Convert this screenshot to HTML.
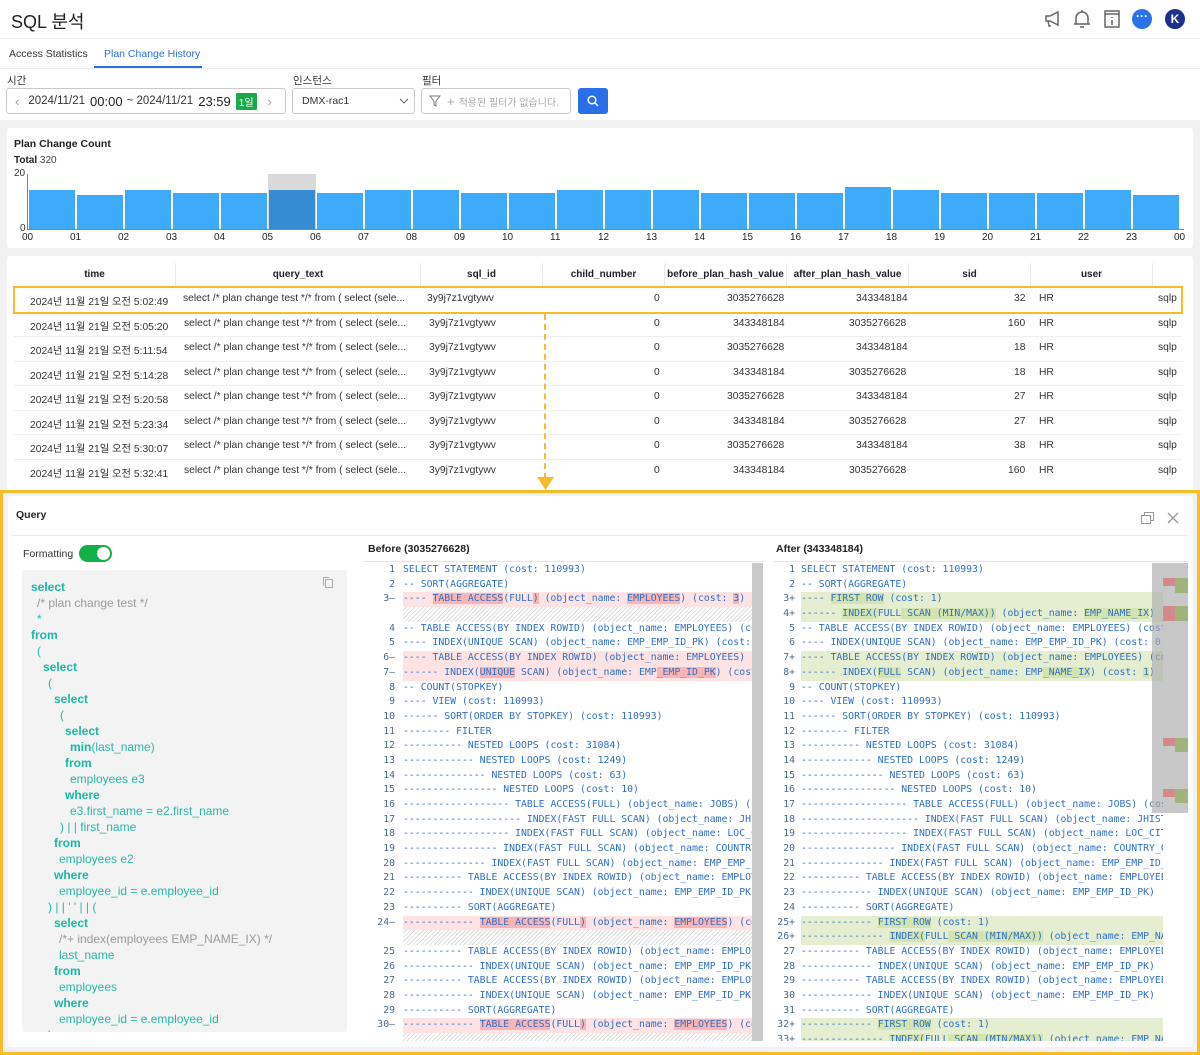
<!DOCTYPE html>
<html><head><meta charset="utf-8">
<style>
*{box-sizing:border-box;margin:0;padding:0}
body{width:1200px;height:1055px;overflow:hidden;background:#f2f2f2;font-family:"Liberation Sans","Noto Sans CJK KR",sans-serif;color:#333;position:relative}
.abs{position:absolute}
.top{left:0;top:0;width:1200px;height:120px;background:#fff}
.input{position:absolute;top:88px;height:26px;border:1px solid #c9c9c9;border-radius:3px;background:#fff;font-size:11.5px;display:flex;align-items:center}
.card{position:absolute;background:#fff;border-radius:3px}
.th{position:absolute;top:263px;height:24px;line-height:24px;font-size:10px;font-weight:bold;text-align:center;border-right:1px solid #eaeaea;color:#222;white-space:nowrap;overflow:hidden}
.row{position:absolute;left:14px;width:1168px;height:24.5px;border-bottom:1px solid #efefef;font-size:10.3px;color:#333;overflow:hidden}
.row span{position:absolute;top:5px;white-space:nowrap}
.mono{font-family:"DejaVu Sans Mono","Liberation Mono",monospace;font-size:9.8px;color:#2f6fc4}
.dl{height:14.7px;line-height:14.7px;white-space:pre;position:relative}
.n{position:absolute;text-align:right;color:#4d6b8a;width:30px}
.red{background:#fde3e3;display:inline-block;width:360px}
.grn{background:#e5eed0}
.hr{background:#f9b5b5}
.hg{background:#d3e4ae}
.hatch{background:repeating-linear-gradient(135deg,#fff 0 2px,#dcdcdc 2px 3px)}
.kw{font-weight:bold;color:#18b8a6}
.tx{color:#2ab7aa}
.cm{color:#9a9a9a}
.ql{position:absolute;font-size:12px;white-space:nowrap}
</style></head><body>
<div class="abs top"></div>
<div class="abs" style="left:11px;top:8px;font-size:18px;color:#222">SQL 분석</div>
<div class="abs" style="left:0;top:38px;width:1200px;height:1px;background:#ececec"></div>
<svg class="abs" style="left:1043px;top:9px" width="20" height="20" viewBox="0 0 20 20" fill="none" stroke="#666" stroke-width="1.5"><path d="M3 7h4l8-4v13l-8-4H3z M5 12l1 5h2"/></svg>
<svg class="abs" style="left:1072px;top:8px" width="20" height="22" viewBox="0 0 20 22" fill="none" stroke="#666" stroke-width="1.5"><path d="M10 2v2 M4 16V10a6 6 0 0 1 12 0v6 M2 16h16 M8 19h4"/></svg>
<svg class="abs" style="left:1102px;top:9px" width="20" height="20" viewBox="0 0 20 20" fill="none" stroke="#666" stroke-width="1.5"><rect x="3" y="2" width="14" height="16"/><path d="M3 5h14 M10 8v1 M10 11v5"/></svg>
<div class="abs" style="left:1132px;top:9px;width:20px;height:20px;border-radius:50%;background:#2a72e8;color:#fff;font-size:12px;text-align:center;line-height:15px;font-weight:bold">···</div>
<div class="abs" style="left:1165px;top:9px;width:20px;height:20px;border-radius:50%;background:#1e2f8c;color:#fff;font-size:12px;text-align:center;line-height:20px;font-weight:bold">K</div>
<div class="abs" style="left:9px;top:48px;font-size:10.5px;color:#333">Access Statistics</div>
<div class="abs" style="left:104px;top:48px;font-size:10.5px;color:#2a6fe0">Plan Change History</div>
<div class="abs" style="left:94px;top:66px;width:108px;height:2px;background:#2a6fe0"></div>
<div class="abs" style="left:0;top:68px;width:1200px;height:1px;background:#ececec"></div>
<div class="abs" style="left:7px;top:73px;font-size:10.5px">시간</div>
<div class="abs" style="left:293px;top:73px;font-size:10.5px">인스턴스</div>
<div class="abs" style="left:422px;top:73px;font-size:10.5px">필터</div>
<div class="input" style="left:6px;width:280px">
 <span style="color:#999;margin-left:8px;font-size:13px">&#8249;</span>
 <span style="margin-left:9px;color:#333">2024/11/21</span>
 <span style="margin-left:5px;font-size:13px;color:#222">00:00</span>
 <span style="margin-left:4px">~ 2024/11/21</span>
 <span style="margin-left:5px;font-size:13px;color:#222">23:59</span>
 <span style="margin-left:5px;background:#1ba94c;color:#fff;font-size:10px;padding:1px 3px;border-radius:1px">1일</span>
 <span style="color:#999;margin-left:11px;font-size:13px">&#8250;</span>
</div>
<div class="input" style="left:292px;width:123px"><span style="margin-left:9px;font-size:10.5px">DMX-rac1</span>
<svg class="abs" style="left:106px;top:9px" width="10" height="7" viewBox="0 0 10 7" fill="none" stroke="#666"><path d="M1 1l4 4 4-4"/></svg></div>
<div class="input" style="left:421px;width:150px"><svg style="margin-left:7px" width="12" height="12" viewBox="0 0 12 12" fill="none" stroke="#777"><path d="M1 1h10L7 6v5L5 10V6z"/></svg><span style="margin-left:6px;color:#aaa;font-size:13px">+</span><span style="margin-left:4px;color:#aaa;font-size:10px">적용된 필터가 없습니다.</span></div>
<div class="abs" style="left:578px;top:88px;width:30px;height:26px;background:#2a6fe8;border-radius:3px"><svg style="position:absolute;left:9px;top:7px" width="12" height="12" viewBox="0 0 12 12" fill="none" stroke="#fff" stroke-width="1.5"><circle cx="5" cy="5" r="3.8"/><path d="M8 8l3 3"/></svg></div>

<div class="card" style="left:7px;top:128px;width:1186px;height:120px"></div>
<div class="abs" style="left:14px;top:138px;font-size:10.5px;font-weight:bold;color:#222">Plan Change Count</div>
<div class="abs" style="left:14px;top:155px;font-size:10px;color:#444"><b style="color:#222">Total</b> 320</div>
<div class="abs" style="left:14px;top:168px;font-size:10px">20</div>
<div class="abs" style="left:20px;top:223px;font-size:10px">0</div>
<div class="abs" style="left:27px;top:174px;width:1px;height:56px;background:#888"></div>
<div class="abs" style="left:27px;top:229px;width:1157px;height:1px;background:#888"></div>
<div class="abs" style="left:268px;top:174px;width:48px;height:55px;background:#d9d9d9"></div>
<svg class="abs" style="left:28px;top:174px" width="1156" height="55">
<g fill="#3fa9fa">
<rect x="1" y="16" width="46" height="39"/><rect x="49" y="21" width="46" height="34"/><rect x="97" y="16" width="46" height="39"/><rect x="145" y="19" width="46" height="36"/><rect x="193" y="19" width="46" height="36"/><rect x="241" y="16" width="46" height="39" fill="#378bd2"/><rect x="289" y="19" width="46" height="36"/><rect x="337" y="16" width="46" height="39"/><rect x="385" y="16" width="46" height="39"/><rect x="433" y="19" width="46" height="36"/><rect x="481" y="19" width="46" height="36"/><rect x="529" y="16" width="46" height="39"/><rect x="577" y="16" width="46" height="39"/><rect x="625" y="16" width="46" height="39"/><rect x="673" y="19" width="46" height="36"/><rect x="721" y="19" width="46" height="36"/><rect x="769" y="19" width="46" height="36"/><rect x="817" y="13" width="46" height="42"/><rect x="865" y="16" width="46" height="39"/><rect x="913" y="19" width="46" height="36"/><rect x="961" y="19" width="46" height="36"/><rect x="1009" y="19" width="46" height="36"/><rect x="1057" y="16" width="46" height="39"/><rect x="1105" y="21" width="46" height="34"/>
</g></svg>
<div class="abs" style="left:0;top:232px;width:1200px;font-size:10px;color:#222;height:12px">
<span class="abs" style="left:22px">00</span><span class="abs" style="left:70px">01</span><span class="abs" style="left:118px">02</span><span class="abs" style="left:166px">03</span><span class="abs" style="left:214px">04</span><span class="abs" style="left:262px">05</span><span class="abs" style="left:310px">06</span><span class="abs" style="left:358px">07</span><span class="abs" style="left:406px">08</span><span class="abs" style="left:454px">09</span><span class="abs" style="left:502px">10</span><span class="abs" style="left:550px">11</span><span class="abs" style="left:598px">12</span><span class="abs" style="left:646px">13</span><span class="abs" style="left:694px">14</span><span class="abs" style="left:742px">15</span><span class="abs" style="left:790px">16</span><span class="abs" style="left:838px">17</span><span class="abs" style="left:886px">18</span><span class="abs" style="left:934px">19</span><span class="abs" style="left:982px">20</span><span class="abs" style="left:1030px">21</span><span class="abs" style="left:1078px">22</span><span class="abs" style="left:1126px">23</span><span class="abs" style="left:1174px">00</span>
</div>

<div class="card" style="left:7px;top:256px;width:1186px;height:236px"></div>
<div class="abs" style="left:14px;top:287px;width:1168px;height:1px;background:#e5e5e5"></div>
<div class="th" style="left:14px;width:162px">time</div>
<div class="th" style="left:176px;width:245px">query_text</div>
<div class="th" style="left:421px;width:122px">sql_id</div>
<div class="th" style="left:543px;width:122px">child_number</div>
<div class="th" style="left:665px;width:122px">before_plan_hash_value</div>
<div class="th" style="left:787px;width:122px">after_plan_hash_value</div>
<div class="th" style="left:909px;width:122px">sid</div>
<div class="th" style="left:1031px;width:122px">user</div>

<div class="row" style="top:288px"><span style="left:16px">2024년 11월 21일 오전 5:02:49</span><span style="left:169px">select /* plan change test */* from ( select (sele...</span><span style="left:413px">3y9j7z1vgtywv</span><span style="left:640px">0</span><span style="left:713px">3035276628</span><span style="left:842px">343348184</span><span style="left:1000px">32</span><span style="left:1025px">HR</span><span style="left:1144px">sqlp</span></div>
<div class="row" style="top:312.5px"><span style="left:16px">2024년 11월 21일 오전 5:05:20</span><span style="left:170px">select /* plan change test */* from ( select (sele...</span><span style="left:415px">3y9j7z1vgtywv</span><span style="left:640px">0</span><span style="left:719px">343348184</span><span style="left:835px">3035276628</span><span style="left:994px">160</span><span style="left:1025px">HR</span><span style="left:1144px">sqlp</span></div>
<div class="row" style="top:337px"><span style="left:16px">2024년 11월 21일 오전 5:11:54</span><span style="left:170px">select /* plan change test */* from ( select (sele...</span><span style="left:415px">3y9j7z1vgtywv</span><span style="left:640px">0</span><span style="left:713px">3035276628</span><span style="left:842px">343348184</span><span style="left:1000px">18</span><span style="left:1025px">HR</span><span style="left:1144px">sqlp</span></div>
<div class="row" style="top:361.5px"><span style="left:16px">2024년 11월 21일 오전 5:14:28</span><span style="left:170px">select /* plan change test */* from ( select (sele...</span><span style="left:415px">3y9j7z1vgtywv</span><span style="left:640px">0</span><span style="left:719px">343348184</span><span style="left:835px">3035276628</span><span style="left:1000px">18</span><span style="left:1025px">HR</span><span style="left:1144px">sqlp</span></div>
<div class="row" style="top:386px"><span style="left:16px">2024년 11월 21일 오전 5:20:58</span><span style="left:170px">select /* plan change test */* from ( select (sele...</span><span style="left:415px">3y9j7z1vgtywv</span><span style="left:640px">0</span><span style="left:713px">3035276628</span><span style="left:842px">343348184</span><span style="left:1000px">27</span><span style="left:1025px">HR</span><span style="left:1144px">sqlp</span></div>
<div class="row" style="top:410.5px"><span style="left:16px">2024년 11월 21일 오전 5:23:34</span><span style="left:170px">select /* plan change test */* from ( select (sele...</span><span style="left:415px">3y9j7z1vgtywv</span><span style="left:640px">0</span><span style="left:719px">343348184</span><span style="left:835px">3035276628</span><span style="left:1000px">27</span><span style="left:1025px">HR</span><span style="left:1144px">sqlp</span></div>
<div class="row" style="top:435px"><span style="left:16px">2024년 11월 21일 오전 5:30:07</span><span style="left:170px">select /* plan change test */* from ( select (sele...</span><span style="left:415px">3y9j7z1vgtywv</span><span style="left:640px">0</span><span style="left:713px">3035276628</span><span style="left:842px">343348184</span><span style="left:1000px">38</span><span style="left:1025px">HR</span><span style="left:1144px">sqlp</span></div>
<div class="row" style="top:459.5px;border-bottom:none"><span style="left:16px">2024년 11월 21일 오전 5:32:41</span><span style="left:170px">select /* plan change test */* from ( select (sele...</span><span style="left:415px">3y9j7z1vgtywv</span><span style="left:640px">0</span><span style="left:719px">343348184</span><span style="left:835px">3035276628</span><span style="left:994px">160</span><span style="left:1025px">HR</span><span style="left:1144px">sqlp</span></div>
<div class="abs" style="left:13px;top:286px;width:1170px;height:28px;border:2px solid #f7bc2a"></div>
<div class="abs" style="left:544px;top:314px;width:0;height:165px;border-left:2px dashed #f7bc2a"></div>
<svg class="abs" style="left:537px;top:477px" width="17" height="13"><path d="M0 0h17L8.5 13z" fill="#f7bc2a"/></svg>

<div class="abs" style="left:0;top:490px;width:1200px;height:565px;border:3px solid #f7bc2a;background:#f2f2f2"></div>
<div class="card" style="left:8px;top:496px;width:1185px;height:551px"></div>
<div class="abs" style="left:16px;top:509px;font-size:10.5px;font-weight:bold;color:#222">Query</div>
<svg class="abs" style="left:1140px;top:511px" width="15" height="14" fill="none" stroke="#999"><rect x="1.5" y="4.5" width="9" height="8"/><path d="M4.5 4.5V1.5h9v8h-3"/></svg>
<svg class="abs" style="left:1167px;top:512px" width="12" height="12" stroke="#999" stroke-width="1.3"><path d="M1 1l10 10M11 1L1 11"/></svg>
<div class="abs" style="left:12px;top:535px;width:1176px;height:1px;background:#e8e8e8"></div>
<div class="abs" style="left:23px;top:548px;font-size:10.5px;color:#333">Formatting</div>
<div class="abs" style="left:79px;top:545px;width:33px;height:17px;border-radius:9px;background:#12b047"><div style="position:absolute;right:2px;top:2px;width:13px;height:13px;border-radius:50%;background:#fff"></div></div>
<div class="abs" style="left:22px;top:570px;width:325px;height:462px;background:#f3f3f3;border-radius:3px;overflow:hidden">
<svg style="position:absolute;left:300px;top:6px" width="12" height="12" fill="none" stroke="#aaa"><rect x="3.5" y="3.5" width="7" height="8"/><path d="M1.5 9.5v-8h6"/></svg>
<div class="ql kw" style="left:9px;top:10px">select</div>
<div class="ql cm" style="left:15px;top:26px">/* plan change test */</div>
<div class="ql tx" style="left:15px;top:42px">*</div>
<div class="ql kw" style="left:9px;top:58px">from</div>
<div class="ql tx" style="left:15px;top:74px">(</div>
<div class="ql kw" style="left:21px;top:90px">select</div>
<div class="ql tx" style="left:26px;top:106px">(</div>
<div class="ql kw" style="left:32px;top:122px">select</div>
<div class="ql tx" style="left:38px;top:138px">(</div>
<div class="ql kw" style="left:43px;top:154px">select</div>
<div class="ql tx" style="left:48px;top:170px"><b class="kw">min</b>(last_name)</div>
<div class="ql kw" style="left:43px;top:186px">from</div>
<div class="ql tx" style="left:48px;top:202px">employees e3</div>
<div class="ql kw" style="left:43px;top:218px">where</div>
<div class="ql tx" style="left:48px;top:234px">e3.first_name = e2.first_name</div>
<div class="ql tx" style="left:38px;top:250px">) | | first_name</div>
<div class="ql kw" style="left:32px;top:266px">from</div>
<div class="ql tx" style="left:37px;top:282px">employees e2</div>
<div class="ql kw" style="left:32px;top:298px">where</div>
<div class="ql tx" style="left:37px;top:314px">employee_id = e.employee_id</div>
<div class="ql tx" style="left:26px;top:330px">) | | ' ' | | (</div>
<div class="ql kw" style="left:32px;top:346px">select</div>
<div class="ql cm" style="left:37px;top:362px">/*+ index(employees EMP_NAME_IX) */</div>
<div class="ql tx" style="left:37px;top:378px">last_name</div>
<div class="ql kw" style="left:32px;top:394px">from</div>
<div class="ql tx" style="left:37px;top:410px">employees</div>
<div class="ql kw" style="left:32px;top:426px">where</div>
<div class="ql tx" style="left:37px;top:442px">employee_id = e.employee_id</div>
<div class="ql tx" style="left:26px;top:458px">)</div>
</div>

<div class="abs" style="left:368px;top:543px;font-size:10.5px;font-weight:bold;color:#222">Before (3035276628)</div>
<div class="abs" style="left:776px;top:543px;font-size:10.5px;font-weight:bold;color:#222">After (343348184)</div>
<div class="abs" style="left:364px;top:561px;width:400px;height:1px;background:#e5e5e5"></div>
<div class="abs" style="left:773px;top:561px;width:416px;height:1px;background:#e5e5e5"></div>

<div class="abs mono" style="left:365px;top:563px;width:387px;height:478px;overflow:hidden">
<div class="dl"><span class="n">1</span><span style="margin-left:38px">SELECT STATEMENT (cost: 110993)</span></div>
<div class="dl"><span class="n">2</span><span style="margin-left:38px">-- SORT(AGGREGATE)</span></div>
<div class="dl"><span class="n">3—</span><span style="margin-left:38px" class="red">---- <span class="hr">TABLE ACCESS</span>(FULL<span class="hr">)</span> (object_name: <span class="hr">EMPLOYEES</span>) (cost: <span class="hr">3</span>)</span></div>
<div class="dl"><span style="margin-left:38px;display:inline-block;width:360px;height:14.7px" class="hatch"></span></div>
<div class="dl"><span class="n">4</span><span style="margin-left:38px">-- TABLE ACCESS(BY INDEX ROWID) (object_name: EMPLOYEES) (cost</span></div>
<div class="dl"><span class="n">5</span><span style="margin-left:38px">---- INDEX(UNIQUE SCAN) (object_name: EMP_EMP_ID_PK) (cost: 0</span></div>
<div class="dl"><span class="n">6—</span><span style="margin-left:38px" class="red">---- TABLE ACCESS(BY INDEX ROWID) (object_name: EMPLOYEES) (co</span></div>
<div class="dl"><span class="n">7—</span><span style="margin-left:38px" class="red">------ INDEX(<span class="hr">UNIQUE</span> SCAN) (object_name: EMP<span class="hr">_EMP_ID_PK</span>) (cost: </span></div>
<div class="dl"><span class="n">8</span><span style="margin-left:38px">-- COUNT(STOPKEY)</span></div>
<div class="dl"><span class="n">9</span><span style="margin-left:38px">---- VIEW (cost: 110993)</span></div>
<div class="dl"><span class="n">10</span><span style="margin-left:38px">------ SORT(ORDER BY STOPKEY) (cost: 110993)</span></div>
<div class="dl"><span class="n">11</span><span style="margin-left:38px">-------- FILTER</span></div>
<div class="dl"><span class="n">12</span><span style="margin-left:38px">---------- NESTED LOOPS (cost: 31084)</span></div>
<div class="dl"><span class="n">13</span><span style="margin-left:38px">------------ NESTED LOOPS (cost: 1249)</span></div>
<div class="dl"><span class="n">14</span><span style="margin-left:38px">-------------- NESTED LOOPS (cost: 63)</span></div>
<div class="dl"><span class="n">15</span><span style="margin-left:38px">---------------- NESTED LOOPS (cost: 10)</span></div>
<div class="dl"><span class="n">16</span><span style="margin-left:38px">------------------ TABLE ACCESS(FULL) (object_name: JOBS) (cost</span></div>
<div class="dl"><span class="n">17</span><span style="margin-left:38px">-------------------- INDEX(FAST FULL SCAN) (object_name: JHIST_E</span></div>
<div class="dl"><span class="n">18</span><span style="margin-left:38px">------------------ INDEX(FAST FULL SCAN) (object_name: LOC_CITY_</span></div>
<div class="dl"><span class="n">19</span><span style="margin-left:38px">---------------- INDEX(FAST FULL SCAN) (object_name: COUNTRY_C_</span></div>
<div class="dl"><span class="n">20</span><span style="margin-left:38px">-------------- INDEX(FAST FULL SCAN) (object_name: EMP_EMP_ID_PK</span></div>
<div class="dl"><span class="n">21</span><span style="margin-left:38px">---------- TABLE ACCESS(BY INDEX ROWID) (object_name: EMPLOYEE</span></div>
<div class="dl"><span class="n">22</span><span style="margin-left:38px">------------ INDEX(UNIQUE SCAN) (object_name: EMP_EMP_ID_PK)</span></div>
<div class="dl"><span class="n">23</span><span style="margin-left:38px">---------- SORT(AGGREGATE)</span></div>
<div class="dl"><span class="n">24—</span><span style="margin-left:38px" class="red">------------ <span class="hr">TABLE ACCESS</span>(FULL<span class="hr">)</span> (object_name: <span class="hr">EMPLOYEES</span>) (cos</span></div>
<div class="dl"><span style="margin-left:38px;display:inline-block;width:360px;height:14.7px" class="hatch"></span></div>
<div class="dl"><span class="n">25</span><span style="margin-left:38px">---------- TABLE ACCESS(BY INDEX ROWID) (object_name: EMPLOYEE</span></div>
<div class="dl"><span class="n">26</span><span style="margin-left:38px">------------ INDEX(UNIQUE SCAN) (object_name: EMP_EMP_ID_PK)</span></div>
<div class="dl"><span class="n">27</span><span style="margin-left:38px">---------- TABLE ACCESS(BY INDEX ROWID) (object_name: EMPLOYEE</span></div>
<div class="dl"><span class="n">28</span><span style="margin-left:38px">------------ INDEX(UNIQUE SCAN) (object_name: EMP_EMP_ID_PK)</span></div>
<div class="dl"><span class="n">29</span><span style="margin-left:38px">---------- SORT(AGGREGATE)</span></div>
<div class="dl"><span class="n">30—</span><span style="margin-left:38px" class="red">------------ <span class="hr">TABLE ACCESS</span>(FULL<span class="hr">)</span> (object_name: <span class="hr">EMPLOYEES</span>) (cos</span></div>
<div class="dl"><span style="margin-left:38px;display:inline-block;width:360px;height:14.7px" class="hatch"></span></div>
</div>
<div class="abs" style="left:752px;top:563px;width:11px;height:478px;background:#c9c9c9"></div>

<div class="abs mono" style="left:765px;top:563px;width:398px;height:478px;overflow:hidden">
<div class="dl"><span class="n">1</span><span style="margin-left:36px">SELECT STATEMENT (cost: 110993)</span></div>
<div class="dl"><span class="n">2</span><span style="margin-left:36px">-- SORT(AGGREGATE)</span></div>
<div class="dl grn" style="margin-left:36px"><span class="n" style="margin-left:-36px">3+</span><span>---- <span class="hg">FIRST ROW</span> (cost: 1)</span></div>
<div class="dl grn" style="margin-left:36px"><span class="n" style="margin-left:-36px">4+</span><span>------ <span class="hg">INDEX(</span>FULL<span class="hg"> SCAN (MIN/MAX))</span> (object_name: <span class="hg">EMP_NAME_IX</span>) (</span></div>
<div class="dl"><span class="n">5</span><span style="margin-left:36px">-- TABLE ACCESS(BY INDEX ROWID) (object_name: EMPLOYEES) (cost</span></div>
<div class="dl"><span class="n">6</span><span style="margin-left:36px">---- INDEX(UNIQUE SCAN) (object_name: EMP_EMP_ID_PK) (cost: 0)</span></div>
<div class="dl grn" style="margin-left:36px"><span class="n" style="margin-left:-36px">7+</span><span>---- TABLE ACCESS(BY INDEX ROWID) (object_name: EMPLOYEES) (co</span></div>
<div class="dl grn" style="margin-left:36px"><span class="n" style="margin-left:-36px">8+</span><span>------ INDEX(<span class="hg">FULL</span> SCAN) (object_name: EMP<span class="hg">_NAME_IX</span>) (cost: <span class="hg">1</span>)</span></div>
<div class="dl"><span class="n">9</span><span style="margin-left:36px">-- COUNT(STOPKEY)</span></div>
<div class="dl"><span class="n">10</span><span style="margin-left:36px">---- VIEW (cost: 110993)</span></div>
<div class="dl"><span class="n">11</span><span style="margin-left:36px">------ SORT(ORDER BY STOPKEY) (cost: 110993)</span></div>
<div class="dl"><span class="n">12</span><span style="margin-left:36px">-------- FILTER</span></div>
<div class="dl"><span class="n">13</span><span style="margin-left:36px">---------- NESTED LOOPS (cost: 31084)</span></div>
<div class="dl"><span class="n">14</span><span style="margin-left:36px">------------ NESTED LOOPS (cost: 1249)</span></div>
<div class="dl"><span class="n">15</span><span style="margin-left:36px">-------------- NESTED LOOPS (cost: 63)</span></div>
<div class="dl"><span class="n">16</span><span style="margin-left:36px">---------------- NESTED LOOPS (cost: 10)</span></div>
<div class="dl"><span class="n">17</span><span style="margin-left:36px">------------------ TABLE ACCESS(FULL) (object_name: JOBS) (cost</span></div>
<div class="dl"><span class="n">18</span><span style="margin-left:36px">-------------------- INDEX(FAST FULL SCAN) (object_name: JHIST_E</span></div>
<div class="dl"><span class="n">19</span><span style="margin-left:36px">------------------ INDEX(FAST FULL SCAN) (object_name: LOC_CITY_</span></div>
<div class="dl"><span class="n">20</span><span style="margin-left:36px">---------------- INDEX(FAST FULL SCAN) (object_name: COUNTRY_C_</span></div>
<div class="dl"><span class="n">21</span><span style="margin-left:36px">-------------- INDEX(FAST FULL SCAN) (object_name: EMP_EMP_ID_PK</span></div>
<div class="dl"><span class="n">22</span><span style="margin-left:36px">---------- TABLE ACCESS(BY INDEX ROWID) (object_name: EMPLOYEE</span></div>
<div class="dl"><span class="n">23</span><span style="margin-left:36px">------------ INDEX(UNIQUE SCAN) (object_name: EMP_EMP_ID_PK)</span></div>
<div class="dl"><span class="n">24</span><span style="margin-left:36px">---------- SORT(AGGREGATE)</span></div>
<div class="dl grn" style="margin-left:36px"><span class="n" style="margin-left:-36px">25+</span><span>------------ <span class="hg">FIRST ROW</span> (cost: 1)</span></div>
<div class="dl grn" style="margin-left:36px"><span class="n" style="margin-left:-36px">26+</span><span>-------------- <span class="hg">INDEX(</span>FULL<span class="hg"> SCAN (MIN/MAX))</span> (object_name: EMP_NA</span></div>
<div class="dl"><span class="n">27</span><span style="margin-left:36px">---------- TABLE ACCESS(BY INDEX ROWID) (object_name: EMPLOYEE</span></div>
<div class="dl"><span class="n">28</span><span style="margin-left:36px">------------ INDEX(UNIQUE SCAN) (object_name: EMP_EMP_ID_PK)</span></div>
<div class="dl"><span class="n">29</span><span style="margin-left:36px">---------- TABLE ACCESS(BY INDEX ROWID) (object_name: EMPLOYEE</span></div>
<div class="dl"><span class="n">30</span><span style="margin-left:36px">------------ INDEX(UNIQUE SCAN) (object_name: EMP_EMP_ID_PK)</span></div>
<div class="dl"><span class="n">31</span><span style="margin-left:36px">---------- SORT(AGGREGATE)</span></div>
<div class="dl grn" style="margin-left:36px"><span class="n" style="margin-left:-36px">32+</span><span>------------ <span class="hg">FIRST ROW</span> (cost: 1)</span></div>
<div class="dl grn" style="margin-left:36px"><span class="n" style="margin-left:-36px">33+</span><span>-------------- <span class="hg">INDEX(</span>FULL<span class="hg"> SCAN (MIN/MAX))</span> (object_name: EMP_NA</span></div>
</div>
<div class="abs" style="left:1152px;top:563px;width:36px;height:250px;background:rgba(170,170,170,.65)"></div>
<div class="abs" style="left:1163px;top:578px;width:12px;height:8px;background:#d28a8a"></div>
<div class="abs" style="left:1175px;top:578px;width:13px;height:15px;background:#9fb47a"></div>
<div class="abs" style="left:1163px;top:606px;width:12px;height:15px;background:#d28a8a"></div>
<div class="abs" style="left:1175px;top:606px;width:13px;height:15px;background:#9fb47a"></div>
<div class="abs" style="left:1163px;top:738px;width:12px;height:8px;background:#d28a8a"></div>
<div class="abs" style="left:1175px;top:738px;width:13px;height:14px;background:#9fb47a"></div>
<div class="abs" style="left:1163px;top:789px;width:12px;height:8px;background:#d28a8a"></div>
<div class="abs" style="left:1175px;top:789px;width:13px;height:14px;background:#9fb47a"></div>
</body></html>
